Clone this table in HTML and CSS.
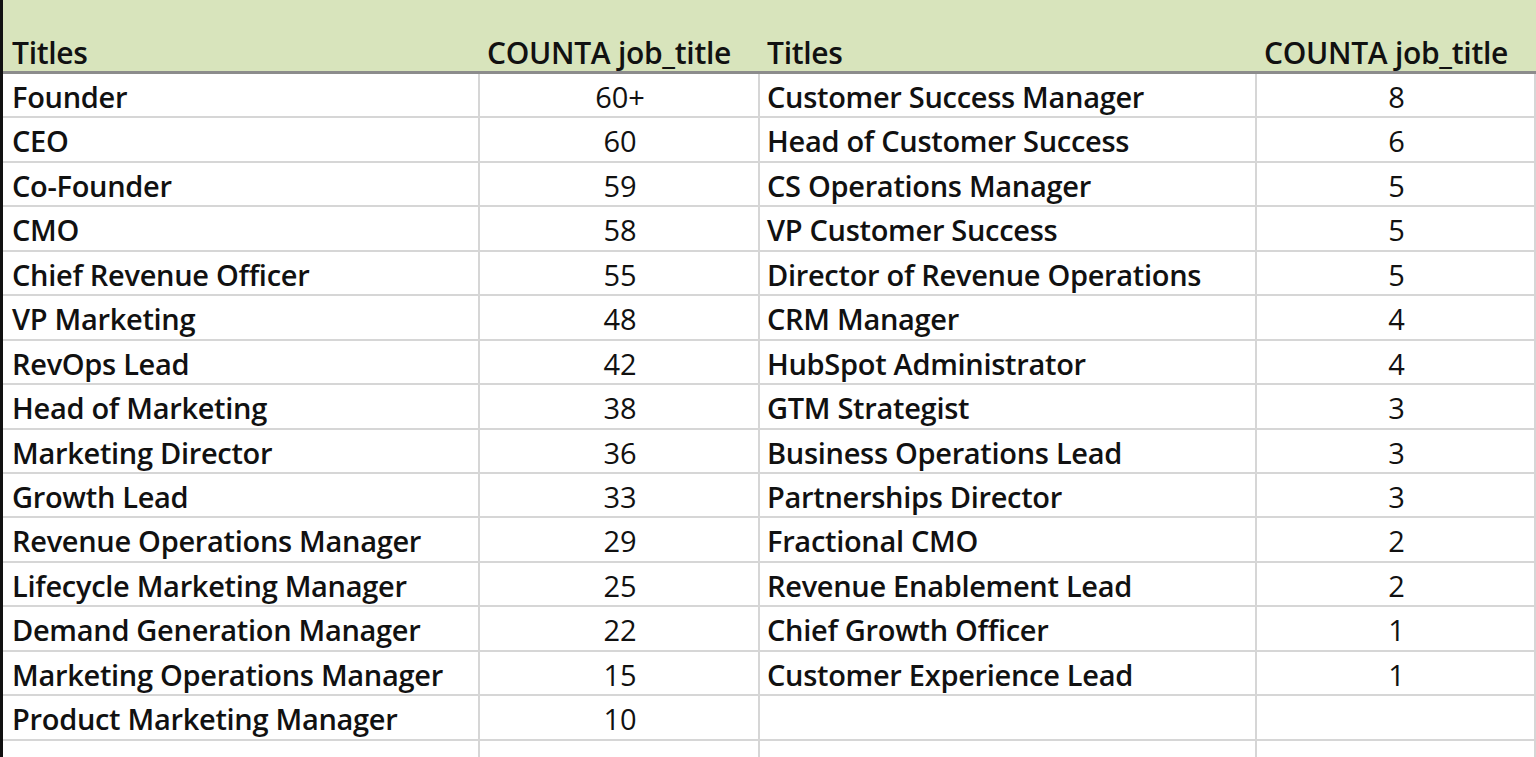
FILE: index.html
```html
<!DOCTYPE html>
<html>
<head>
<meta charset="utf-8">
<link rel="stylesheet" href="styles.css">
</head>
<body>
<div class="sheet">
  <div class="cell hd">Titles</div>
  <div class="cell hd">COUNTA job_title</div>
  <div class="cell hd">Titles</div>
  <div class="cell hd">COUNTA job_title</div>

  <div class="cell t">Founder</div><div class="cell n">60+</div><div class="cell t">Customer Success Manager</div><div class="cell n">8</div>
  <div class="cell t">CEO</div><div class="cell n">60</div><div class="cell t">Head of Customer Success</div><div class="cell n">6</div>
  <div class="cell t">Co-Founder</div><div class="cell n">59</div><div class="cell t">CS Operations Manager</div><div class="cell n">5</div>
  <div class="cell t">CMO</div><div class="cell n">58</div><div class="cell t">VP Customer Success</div><div class="cell n">5</div>
  <div class="cell t">Chief Revenue Officer</div><div class="cell n">55</div><div class="cell t">Director of Revenue Operations</div><div class="cell n">5</div>
  <div class="cell t">VP Marketing</div><div class="cell n">48</div><div class="cell t">CRM Manager</div><div class="cell n">4</div>
  <div class="cell t">RevOps Lead</div><div class="cell n">42</div><div class="cell t">HubSpot Administrator</div><div class="cell n">4</div>
  <div class="cell t">Head of Marketing</div><div class="cell n">38</div><div class="cell t">GTM Strategist</div><div class="cell n">3</div>
  <div class="cell t">Marketing Director</div><div class="cell n">36</div><div class="cell t">Business Operations Lead</div><div class="cell n">3</div>
  <div class="cell t">Growth Lead</div><div class="cell n">33</div><div class="cell t">Partnerships Director</div><div class="cell n">3</div>
  <div class="cell t">Revenue Operations Manager</div><div class="cell n">29</div><div class="cell t">Fractional CMO</div><div class="cell n">2</div>
  <div class="cell t">Lifecycle Marketing Manager</div><div class="cell n">25</div><div class="cell t">Revenue Enablement Lead</div><div class="cell n">2</div>
  <div class="cell t">Demand Generation Manager</div><div class="cell n">22</div><div class="cell t">Chief Growth Officer</div><div class="cell n">1</div>
  <div class="cell t">Marketing Operations Manager</div><div class="cell n">15</div><div class="cell t">Customer Experience Lead</div><div class="cell n">1</div>
  <div class="cell t">Product Marketing Manager</div><div class="cell n">10</div><div class="cell t"></div><div class="cell n"></div>
  <div class="cell t"></div><div class="cell n"></div><div class="cell t"></div><div class="cell n"></div>
</div>
</body>
</html>
```
FILE: styles.css
```css
html, body {
  margin: 0;
  padding: 0;
  background: #ffffff;
  overflow: hidden;
}
.sheet {
  display: grid;
  grid-template-columns: 477px 280px 497px 279px;
  grid-auto-rows: 44.45px;
  grid-template-rows: 74px;
  border-left: 3px solid #111111;
  width: 1533px;
  font-family: "Open Sans", "Liberation Sans", sans-serif;
  color: #111111;
}
.cell {
  box-sizing: border-box;
  border-bottom: 2px solid #d6d6d6;
  border-right: 2px solid #d6d6d6;
  font-size: 29px;
  line-height: 42px;
  padding-top: 2px;
  white-space: nowrap;
  overflow: hidden;
}
.hd {
  background: #d8e4bc;
  border-right: none;
  border-bottom: 3px solid #8c8c8c;
  font-weight: 600;
  font-size: 30px;
  line-height: 36px;
  display: flex;
  align-items: flex-end;
  padding: 0 0 0 7px;
  letter-spacing: -0.3px;
}
.hd:first-child {
  padding-left: 9px;
}
.t {
  font-weight: 600;
  padding-left: 7px;
  letter-spacing: -0.3px;
}
.sheet > .t:nth-child(4n+1) {
  padding-left: 9px;
}
.n {
  text-align: center;
  font-weight: 400;
  padding-left: 2px;
}
```
